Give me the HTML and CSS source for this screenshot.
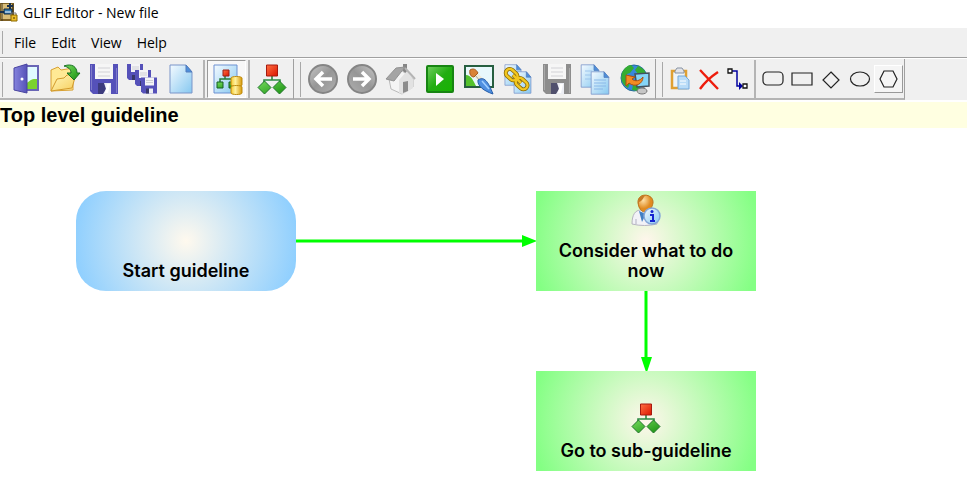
FILE: index.html
```html
<!DOCTYPE html>
<html lang="en">
<head>
<meta charset="utf-8">
<title>GLIF Editor - New file</title>
<link rel="stylesheet" href="styles.css">
</head>
<body>
<svg class="defs" aria-hidden="true">
  <defs>
    <linearGradient id="sky" x2="1" y2="1"><stop offset="0" stop-color="#f4faff"/><stop offset="1" stop-color="#86c8f0"/></linearGradient>
    <linearGradient id="purple" x2="1"><stop offset="0" stop-color="#8583dd"/><stop offset="1" stop-color="#5552b8"/></linearGradient>
    <linearGradient id="red" x2="1" y2="1"><stop offset="0" stop-color="#ff7042"/><stop offset="1" stop-color="#dc1600"/></linearGradient>
    <linearGradient id="green" x2="1" y2="1"><stop offset="0" stop-color="#74da5c"/><stop offset="1" stop-color="#189010"/></linearGradient>
    <linearGradient id="play" x2="1" y2="1"><stop offset="0" stop-color="#72cf60"/><stop offset=".5" stop-color="#22ad12"/><stop offset="1" stop-color="#16b400"/></linearGradient>
    <linearGradient id="gray" x2="1" y2="1"><stop offset="0" stop-color="#c6c6c6"/><stop offset=".5" stop-color="#969696"/><stop offset="1" stop-color="#b0b0b0"/></linearGradient>
    <linearGradient id="gold" x2="1"><stop offset="0" stop-color="#f7c92c"/><stop offset=".4" stop-color="#fff2a0"/><stop offset="1" stop-color="#d99a08"/></linearGradient>
    <linearGradient id="folder" x2="1" y2="1"><stop offset="0" stop-color="#fff7bd"/><stop offset="1" stop-color="#f7cf5c"/></linearGradient>
    <radialGradient id="head" cx=".35" cy=".3"><stop offset="0" stop-color="#ffe1a8"/><stop offset="1" stop-color="#e08a20"/></radialGradient>
    <symbol id="tree" viewBox="0 0 32 32">
      <path d="M16 13v4M8 20v-3h16v3" fill="none" stroke="#2c8a43" stroke-width="1.6"/>
      <path d="M10.500 2h11v11h-11z" fill="url(#red)" stroke="#a61a10"/>
      <path d="M8.500 18l6.500 6.500L8.500 31 2 24.500zM23.500 18l6.500 6.500-6.500 6.500-6.500-6.500z" fill="url(#green)" stroke="#21752c"/>
    </symbol>
    <symbol id="disk" viewBox="0 0 32 32">
      <path d="M2 1h28v30H5l-3-3z" fill="currentColor"/>
      <path d="M3 2h1v25H3zM28 5h1v25h-1z" fill="#fff" opacity=".25"/>
      <path d="M7 1h18v15H7z" fill="#f6f6f6"/>
      <path d="M10 5h12M10 9h12M10 13h12" stroke="#d2d2d6"/>
      <path d="M10 20h13v11H10z" fill="#2f2f5c" opacity=".65"/>
      <path d="M16 20h7v11h-8l3-5z" fill="#eceef4"/><path d="M19 21h3l-2 9h-3z" fill="#fff"/>
    </symbol>
    <symbol id="small-disk" viewBox="0 0 16 16">
      <path d="M0 0h16v16H2l-2-2z" fill="currentColor"/>
      <path d="M4 0h9v8H4z" fill="#f4f4f6"/><path d="M5 3h7M5 5h7" stroke="#d0d0d6"/>
      <path d="M5 11h3v5H5z" fill="#38386b"/><path d="M8 11h4v5H8z" fill="#eceef4"/>
    </symbol>
    <symbol id="page" viewBox="0 0 24 30">
      <path d="M1 1h16l6 7v21H1z" fill="url(#sky)" stroke="#7b95c9"/>
      <path d="M17 1v7h6z" fill="#4d8fdb" stroke="#547dbd"/>
    </symbol>
    <symbol id="ball" viewBox="0 0 32 32">
      <circle cx="16" cy="16" r="14" fill="url(#gray)" stroke="#858585" stroke-width="2"/>
      <path d="M25 16H10M16 9l-7 7 7 7" fill="none" stroke="#fff" stroke-width="3.500"/>
    </symbol>
  </defs>
</svg>

<header class="titlebar">
  <svg class="app-icon" viewBox="0 0 18 20" aria-hidden="true">
    <path d="M0 1h14v18H0z" fill="#806225"/><path d="M1 2h11v15H1z" fill="#d9bd78"/>
    <path d="M2 1v18M13 2v15" stroke="#423820"/>
    <path d="M0 10h12M10 1v6M7 4h6" stroke="#1b314c" stroke-width="2"/>
    <path d="M4 7h8v5H4z" fill="#3279b1" stroke="#13293e"/><path d="M6 11V9m2 2V9m2 2V9" stroke="#fff"/>
    <path d="M11 14v-3h5v3" fill="none" stroke="#777"/><path d="M11 13h6v6h-6z" fill="#edbe2b" stroke="#8c6b00"/><path d="M14 15v2" stroke="#4b3900"/>
  </svg>
  <span>GLIF Editor - New file</span>
</header>

<nav class="menubar" aria-label="Main menu">
  <button type="button">File</button><button type="button">Edit</button><button type="button">View</button><button type="button">Help</button>
</nav>

<div class="toolbars">
  <div class="toolbar" role="toolbar" aria-label="File tools">
    <button type="button" class="tool" aria-label="Exit"><svg viewBox="0 0 32 32">
      <path d="M13 3h15v24H13z" fill="#e0fbff" stroke="#6965b5" stroke-width="2"/><path d="M15 25v-5c4 0 5-4 9-4h3v10H15z" fill="#7bd22d"/>
      <path d="M4 5l13-4v29L4 27z" fill="url(#purple)" stroke="#4944a0"/><circle cx="12" cy="16" r="1.500" fill="#fff"/></svg></button>
    <button type="button" class="tool" aria-label="Open"><svg viewBox="0 0 32 32">
      <path d="M2 28V7l7-3 3 3 12-2v22z" fill="#ffe995" stroke="#d8a032"/>
      <path d="M2 28l6-12 7-1 3-3 9-1-4 14z" fill="url(#folder)" stroke="#d29a2b"/>
      <path d="M15 3c8-3 13 1 13 7h3l-6 7-7-7h4c0-4-3-6-7-7z" fill="url(#green)" stroke="#187023"/></svg></button>
    <button type="button" class="tool purple" aria-label="Save"><svg viewBox="0 0 32 32"><use href="#disk"/></svg></button>
    <button type="button" class="tool purple" aria-label="Save all"><svg viewBox="0 0 32 32">
      <use href="#small-disk" x="0" y="1" width="16" height="16"/><use href="#small-disk" x="8" y="7" width="16" height="16"/><use href="#small-disk" x="14" y="14" width="16" height="17"/></svg></button>
    <button type="button" class="tool" aria-label="New"><svg viewBox="0 0 32 32"><use href="#page" x="2" y="1" width="26" height="30"/></svg></button>
    <span class="divider"></span>
    <button type="button" class="tool pressed" aria-label="Guideline repository" aria-pressed="true"><svg viewBox="0 0 32 32">
      <path d="M3 2h23v28H3z" fill="url(#sky)" stroke="#6c91d2"/>
      <path d="M14 12v4M9 19v-3h12v4" fill="none" stroke="#277c38" stroke-width="1.500"/>
      <path d="M12 7h6v6h-6z" fill="url(#red)" stroke="#982018"/><path d="M6 19h6v6H6zM18 19h6v6h-6z" fill="url(#green)" stroke="#145e24"/>
      <path d="M20 15c0-2 11-2 11 0v7c0 2-11 2-11 0z" fill="url(#gold)" stroke="#bd890e"/><path d="M20 24c0-2 11-2 11 0v6c0 2-11 2-11 0z" fill="url(#gold)" stroke="#bd890e"/></svg></button>
    <span class="divider"></span>
    <button type="button" class="tool" aria-label="Guideline tree"><svg viewBox="0 0 32 32"><use href="#tree"/></svg></button>
  </div>

  <div class="toolbar" role="toolbar" aria-label="Browsing tools">
    <button type="button" class="tool" aria-label="Back"><svg viewBox="0 0 32 32"><use href="#ball"/></svg></button>
    <button type="button" class="tool" aria-label="Forward"><svg viewBox="0 0 32 32"><g transform="translate(32 0) scale(-1 1)"><use href="#ball"/></g></svg></button>
    <button type="button" class="tool" aria-label="Home"><svg viewBox="0 0 32 32">
      <path d="M18 1h4v10h-4z" fill="#858585"/><path d="M4 16l12-9 12 9v8l-11 7-11-5z" fill="#f4f4f4" stroke="#bababa"/>
      <path d="M14 30V17l8-9 6 8v9l-10 6z" fill="#e2e2e2"/><path d="M18 19l5-1v10l-5 2z" fill="#8c8c8c"/>
      <path d="M1 16L11 5l9-1-11 14z" fill="#a5a5a5" stroke="#929292"/><path d="M20 5l10 11" stroke="#b4b4b4" stroke-width="2"/></svg></button>
    <button type="button" class="tool" aria-label="Run"><svg viewBox="0 0 32 32">
      <rect x="3" y="3" width="26" height="26" rx="1" fill="url(#play)" stroke="#178512" stroke-width="2"/><path d="M12 10l8 6-8 7z" fill="#fff"/></svg></button>
    <button type="button" class="tool" aria-label="Edit picture"><svg viewBox="0 0 32 32">
      <path d="M2 3h28v21H2z" fill="#e8f8fc" stroke="#275f40" stroke-width="2"/><path d="M3 12c5 0 7 5 10 11H3z" fill="#54c22c"/>
      <path d="M12 11l7 7" stroke="#f0ead8" stroke-width="5"/><path d="M12 12l6 7" stroke="#a8a494" stroke-width="1"/>
      <path d="M7 7c3-2 6-1 8 3l-4 4c-3 0-5-3-4-7z" fill="#d98236" stroke="#a85a1c"/>
      <path d="M15 17c6-4 10 1 15 14-9-3-16-8-15-14z" fill="#4f8fe0" stroke="#245ca8"/><path d="M19 18l7 8" stroke="#a1d0ff" stroke-width="1.500"/></svg></button>
    <button type="button" class="tool" aria-label="Links"><svg viewBox="0 0 32 32">
      <use href="#page" x="2" y="1" width="18" height="22"/><use href="#page" x="11" y="8" width="19" height="23"/>
      <g fill="none" stroke="#866600" stroke-width="4"><rect x="3" y="8" width="13" height="8" rx="4" transform="rotate(42 10 12)"/><rect x="13" y="17" width="13" height="8" rx="4" transform="rotate(42 20 21)"/><path d="M11 12l8 8"/></g>
      <g fill="none" stroke="#f2c720" stroke-width="2.500"><rect x="3" y="8" width="13" height="8" rx="4" transform="rotate(42 10 12)"/><rect x="13" y="17" width="13" height="8" rx="4" transform="rotate(42 20 21)"/><path d="M11 12l8 8"/></g></svg></button>
    <button type="button" class="tool gray" aria-label="Save page"><svg viewBox="0 0 32 32"><use href="#disk"/></svg></button>
    <button type="button" class="tool" aria-label="Copy"><svg viewBox="0 0 32 32">
      <use href="#page" x="0" y="1" width="20" height="24"/><path d="M5 8h7M5 12h6M5 16h6" stroke="#9cc4ec"/>
      <use href="#page" x="10" y="8" width="20" height="24"/><path d="M14 17h12M14 20h12M14 23h12M14 26h9" stroke="#8ab8e8"/></svg></button>
    <button type="button" class="tool" aria-label="Web update"><svg viewBox="0 0 32 32">
      <circle cx="15" cy="15" r="13" fill="#3788dc" stroke="#246c99"/>
      <path d="M3 10c2-5 6-8 9-8l3 3-4 5-3 1-1 5 4 4-2 5C4 22 1 17 3 10zM19 3c5 2 8 5 8 9l-8-1-3-4zM14 22l7 1-2 5-6-1z" fill="#35ad32"/>
      <path d="M16 11l14-1v13l-12 1z" fill="#85d5f7" stroke="#43515e" stroke-width="1.500"/><path d="M24 24v4" stroke="#777" stroke-width="3"/><ellipse cx="23" cy="28" rx="5" ry="3" fill="#c6c6c6" stroke="#777"/>
      <path d="M7 12l9 2-3 2c3 3 8 2 11-2 0 7-8 11-14 6l-3 3z" fill="#f48b22" stroke="#a95111"/></svg></button>
  </div>

  <div class="toolbar compact" role="toolbar" aria-label="Drawing tools">
    <button type="button" class="tool" aria-label="Paste"><svg viewBox="0 0 24 24">
      <path d="M4 4h14v17H4z" fill="#eef4f8" stroke="#dfa032" stroke-width="2.500"/><path d="M7 4l2-3h5l2 3v2H7z" fill="#e2e4e9" stroke="#8792a2"/>
      <path d="M10 9h7l4 4v9H10z" fill="#b9dcf8" stroke="#75a9db"/><path d="M12 14h6M12 17h6" stroke="#fff"/></svg></button>
    <button type="button" class="tool" aria-label="Delete"><svg viewBox="0 0 24 24"><path d="M3 3c5 5 10 11 18 19M21 5C15 9 8 15 3 22" fill="none" stroke="#ed1c0c" stroke-width="2.400"/></svg></button>
    <button type="button" class="tool" aria-label="Connector"><svg viewBox="0 0 24 24">
      <path d="M6 4h5v15h5" fill="none" stroke="#0000a0" stroke-width="1.500"/><path d="M13 15l4 4-4 4z" fill="#0000a0"/><path d="M2 2h4v4H2zM17 17h4v4h-4z" fill="#fff" stroke="#111" stroke-width="1.300"/></svg></button>
    <span class="divider"></span>
    <button type="button" class="tool shape" aria-label="Rounded rectangle"><svg viewBox="0 0 24 24"><rect x="2" y="5" width="20" height="13" rx="4"/></svg></button>
    <button type="button" class="tool shape" aria-label="Rectangle"><svg viewBox="0 0 24 24"><path d="M2 6h20v12H2z"/></svg></button>
    <button type="button" class="tool shape" aria-label="Diamond"><svg viewBox="0 0 24 24"><path d="M12 5l8 8-8 8-8-8z"/></svg></button>
    <button type="button" class="tool shape" aria-label="Ellipse"><svg viewBox="0 0 24 24"><ellipse cx="12" cy="12" rx="9.500" ry="7"/></svg></button>
    <button type="button" class="tool shape raised" aria-label="Hexagon"><svg viewBox="0 0 24 24"><path d="M7 4h9l4 8-4 8H7l-4-8z"/></svg></button>
  </div>
</div>

<h1 class="heading">Top level guideline</h1>

<main class="canvas">
  <svg class="links" aria-hidden="true">
    <path d="M296 113h228M646 162v68" fill="none" stroke="#0f0" stroke-width="3"/>
    <path d="M522 107l15 6-15 6zM641 229h11l-5 15h-1z" fill="#0f0"/>
  </svg>
  <section class="node start"><span>Start guideline</span></section>
  <section class="node action consider">
    <svg class="node-icon" viewBox="0 0 32 32" aria-hidden="true">
      <path d="M2 30c0-9 3-14 9-14h8c6 2 8 7 8 14-8 2-17 2-25 0z" fill="#f2f2f7" stroke="#b6b4c0"/>
      <path d="M9 17l3 11 4-8z" fill="#417fc4"/><path d="M6 25v5" stroke="#b1b1c0"/>
      <path d="M8 9c-1-11 16-10 15 0-1 5-4 9-8 9-4 0-6-4-7-9z" fill="url(#head)" stroke="#ba741f"/>
      <path d="M8 10c0-7 3-9 8-9-3 2-3 6-7 7v6z" fill="#c67a26"/>
      <circle cx="22" cy="22" r="8" fill="url(#sky)" stroke="#84a7d8" stroke-width="1.500"/>
      <circle cx="22" cy="17.500" r="1.500" fill="#1523d0"/><path d="M20 21h3v6M20 27h5" fill="none" stroke="#1523d0" stroke-width="2"/>
    </svg>
    <span>Consider what to do now</span>
  </section>
  <section class="node action sub">
    <svg class="node-icon" viewBox="0 0 32 32" aria-hidden="true"><use href="#tree"/></svg>
    <span>Go to sub-guideline</span>
  </section>
</main>
</body>
</html>
```
FILE: styles.css
```css
* { box-sizing: border-box; }

body {
  margin: 0;
  min-height: 100vh;
  display: flex;
  flex-direction: column;
  background: #fff;
  color: #000;
  font-family: "Open Sans", "Noto Sans", sans-serif;
  font-size: 14px;
}

button {
  margin: 0;
  padding: 0;
  border: 0;
  background: none;
  color: inherit;
  font: inherit;
}

svg { display: block; }

.defs {
  position: absolute;
  width: 0;
  height: 0;
}

.titlebar {
  display: flex;
  align-items: center;
  gap: 5px;
  height: 28px;
  padding-bottom: 4px;
}

.app-icon {
  width: 18px;
  height: 20px;
}

.menubar {
  display: flex;
  align-items: center;
  gap: 15px;
  height: 30px;
  padding-left: 14px;
  border-bottom: 1px solid #a0a0a0;
  background: linear-gradient(#a8a8a8, #a8a8a8) 2px 3px / 1px 23px no-repeat #f0f0f0;
}

.toolbars {
  display: flex;
  height: 44px;
  background: #f0f0f0;
  border-top: 1px solid #fff;
  border-bottom: 2px solid #fff;
}

.toolbar {
  display: flex;
  align-items: center;
  padding: 0 2px 0 6px;
  border-right: 1px solid #a0a0a0;
  border-bottom: 2px solid #b4b4b4;
  background: linear-gradient(#a8a8a8, #a8a8a8) 2px 3px / 1px 35px no-repeat;
}

.toolbar + .toolbar {
  padding: 0 1px 0 9px;
  background-position: 6px 3px;
}

.tool {
  display: grid;
  place-items: center;
  width: 39px;
  height: 38px;
}

.tool svg {
  width: 32px;
  height: 32px;
}

.compact .tool {
  width: 29px;
  height: 28px;
}

.compact .tool svg {
  width: 24px;
  height: 24px;
}

.purple { color: #5551b9; }
.gray { color: #8d8d8d; }

.divider {
  width: 2px;
  height: 38px;
  margin: 0 2px;
  background: #b4b4b4;
}

.pressed {
  border: 1px solid;
  border-color: #999 #fff #fff #999;
  background: #f8f8f8;
}

.shape svg {
  fill: none;
  stroke: #222;
  stroke-width: 1.2;
}

.raised {
  border: 1px solid;
  border-color: #fff #999 #999 #fff;
  background: #f5f5f5;
}

.heading {
  margin: 0;
  background: #ffffe1;
  font: bold 20px/26px "Liberation Sans", sans-serif;
}

.canvas {
  position: relative;
  flex: 1;
  min-height: 360px;
}

.links {
  position: absolute;
  inset: 0;
  width: 100%;
  height: 100%;
}

.node {
  position: absolute;
  display: flex;
  flex-direction: column;
  align-items: center;
  justify-content: flex-end;
  gap: 7px;
  width: 220px;
  height: 100px;
  padding: 0 20px 10px;
  text-align: center;
  font: 600 18px/20px Inter, sans-serif;
}

.node-icon {
  width: 32px;
  height: 32px;
}

.start {
  left: 76px;
  top: 63px;
  border-radius: 30px;
  background: radial-gradient(circle, #fff9ee, #8cceff 115px);
}

.action {
  left: 536px;
  background: radial-gradient(circle, #fff6ec, #84ff84 115px);
}

.consider {
  top: 63px;
  gap: 15px;
}

.sub { top: 243px; }
```
